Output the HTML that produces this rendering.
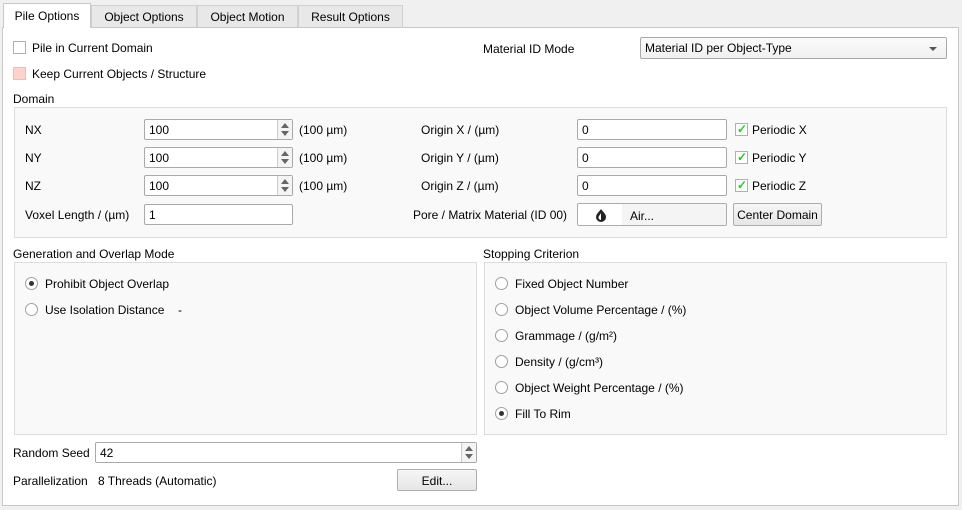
<!DOCTYPE html>
<html><head><style>
*{box-sizing:border-box;margin:0;padding:0}
body{width:962px;height:510px;background:#f0f0f0;font-family:"Liberation Sans",sans-serif;font-size:12px;color:#000;position:relative;overflow:hidden}
.a{position:absolute;white-space:nowrap}
.t{line-height:14px;padding-top:1px}
.tab{position:absolute;top:5px;height:22px;border:1px solid #d0d0d0;border-bottom:none;background:#e8e8e8;text-align:center;line-height:22px}
.panel{position:absolute;left:2px;top:27px;width:957px;height:479px;background:#fff;border:1px solid #c8c8c8}
.grp{position:absolute;background:#f9f9f9;border:1px solid #dcdcdc}
.inp{position:absolute;height:21px;background:#fff;border:1px solid #a9a9a9;border-radius:2px;padding-left:4px;line-height:20px}
.spin{position:absolute;right:0;top:0;width:15px;height:19px;border-left:1px solid #ccc;background:#f4f4f4}
.spin:before{content:"";position:absolute;left:3px;top:3px;border:4px solid transparent;border-bottom:5px solid #666;border-top:none}
.spin:after{content:"";position:absolute;left:3px;top:11px;border:4px solid transparent;border-top:5px solid #666;border-bottom:none}
.btn{position:absolute;height:23px;background:linear-gradient(#f6f6f6,#e6e6e6);border:1px solid #adadad;border-radius:2px;text-align:center;line-height:22px}
.cb{position:absolute;width:13px;height:13px;border:1px solid #b0b0b0;background:#fff}
.rd{position:absolute;width:13px;height:13px;border:1px solid #a0a0a0;border-radius:50%;background:#fff}
.rd.on:after{content:"";position:absolute;left:3px;top:3px;width:5px;height:5px;border-radius:50%;background:#333}
.chk{color:#22cc22;font-size:12px;position:absolute;left:1px;top:-2px;font-weight:bold}
</style></head><body>
<div class="panel"></div>
<div class="tab" style="left:3px;top:3px;width:88px;height:25px;background:#fff;line-height:25px;border-color:#c8c8c8">Pile Options</div>
<div class="tab" style="left:91px;width:106px">Object Options</div>
<div class="tab" style="left:197px;width:101px">Object Motion</div>
<div class="tab" style="left:298px;width:105px">Result Options</div>

<div class="cb" style="left:13px;top:41px"></div><div class="a t" style="left:32px;top:40px">Pile in Current Domain</div>
<div class="cb" style="left:13px;top:67px;background:#fbd3cb;border-color:#e8c0b8"></div><div class="a t" style="left:32px;top:66px">Keep Current Objects / Structure</div>
<div class="a t" style="left:483px;top:41px">Material ID Mode</div>
<div class="inp" style="left:640px;top:37px;width:307px;height:22px;background:linear-gradient(#fbfbfb,#f0f0f0);line-height:21px">Material ID per Object-Type<span class="a" style="right:9px;top:9px;border:4px solid transparent;border-top:4px solid #555;border-bottom:none"></span></div>
<div class="a t" style="left:13px;top:91px">Domain</div>
<div class="grp" style="left:14px;top:107px;width:933px;height:131px"></div>

<div class="a t" style="left:25px;top:122px">NX</div>
<div class="a t" style="left:25px;top:150px">NY</div>
<div class="a t" style="left:25px;top:178px">NZ</div>
<div class="a t" style="left:25px;top:207px">Voxel Length / (µm)</div>
<div class="inp" style="left:144px;top:119px;width:149px">100<div class="spin"></div></div>
<div class="inp" style="left:144px;top:147px;width:149px">100<div class="spin"></div></div>
<div class="inp" style="left:144px;top:175px;width:149px">100<div class="spin"></div></div>
<div class="inp" style="left:144px;top:204px;width:149px">1</div>
<div class="a t" style="left:299px;top:122px">(100 µm)</div>
<div class="a t" style="left:299px;top:150px">(100 µm)</div>
<div class="a t" style="left:299px;top:178px">(100 µm)</div>

<div class="a t" style="left:421px;top:122px">Origin X / (µm)</div>
<div class="a t" style="left:421px;top:150px">Origin Y / (µm)</div>
<div class="a t" style="left:421px;top:178px">Origin Z / (µm)</div>
<div class="a t" style="left:413px;top:207px">Pore / Matrix Material (ID 00)</div>
<div class="inp" style="left:577px;top:119px;width:150px">0</div>
<div class="inp" style="left:577px;top:147px;width:150px">0</div>
<div class="inp" style="left:577px;top:175px;width:150px">0</div>
<div class="cb" style="left:735px;top:123px"><span class="chk">✓</span></div><div class="a t" style="left:752px;top:122px">Periodic X</div>
<div class="cb" style="left:735px;top:151px"><span class="chk">✓</span></div><div class="a t" style="left:752px;top:150px">Periodic Y</div>
<div class="cb" style="left:735px;top:179px"><span class="chk">✓</span></div><div class="a t" style="left:752px;top:178px">Periodic Z</div>
<div class="btn" style="left:577px;top:203px;width:150px;background:linear-gradient(90deg,#fff 44px,#f4f4f4 44px)"><svg class="a" style="left:17px;top:4px" width="12" height="14" viewBox="0 0 12 14"><path d="M6 1 C4 4 1 6 1 9 A5 5 0 0 0 11 9 C11 6 8 4 6 1Z" fill="#222"/><path d="M6 5 C5 7 3.5 8 3.5 9.5 A2.5 2.5 0 0 0 6 12" fill="#fff"/></svg><span class="a" style="left:52px;top:1px">Air...</span></div>
<div class="btn" style="left:733px;top:203px;width:89px">Center Domain</div>

<div class="a t" style="left:13px;top:246px">Generation and Overlap Mode</div>
<div class="grp" style="left:14px;top:262px;width:463px;height:173px"></div>
<div class="rd on" style="left:25px;top:277px"></div><div class="a t" style="left:45px;top:276px">Prohibit Object Overlap</div>
<div class="rd" style="left:25px;top:303px"></div><div class="a t" style="left:45px;top:302px">Use Isolation Distance</div>
<div class="a t" style="left:178px;top:302px">-</div>

<div class="a t" style="left:483px;top:246px">Stopping Criterion</div>
<div class="grp" style="left:484px;top:262px;width:463px;height:173px"></div>
<div class="rd" style="left:495px;top:277px"></div><div class="a t" style="left:515px;top:276px">Fixed Object Number</div>
<div class="rd" style="left:495px;top:303px"></div><div class="a t" style="left:515px;top:302px">Object Volume Percentage / (%)</div>
<div class="rd" style="left:495px;top:329px"></div><div class="a t" style="left:515px;top:328px">Grammage / (g/m²)</div>
<div class="rd" style="left:495px;top:355px"></div><div class="a t" style="left:515px;top:354px">Density / (g/cm³)</div>
<div class="rd" style="left:495px;top:381px"></div><div class="a t" style="left:515px;top:380px">Object Weight Percentage / (%)</div>
<div class="rd on" style="left:495px;top:407px"></div><div class="a t" style="left:515px;top:406px">Fill To Rim</div>

<div class="a t" style="left:13px;top:445px">Random Seed</div>
<div class="inp" style="left:95px;top:442px;width:382px">42<div class="spin"></div></div>
<div class="a t" style="left:13px;top:473px">Parallelization</div>
<div class="a t" style="left:98px;top:473px">8 Threads (Automatic)</div>
<div class="btn" style="left:397px;top:469px;width:80px;height:22px">Edit...</div>
</body></html>
